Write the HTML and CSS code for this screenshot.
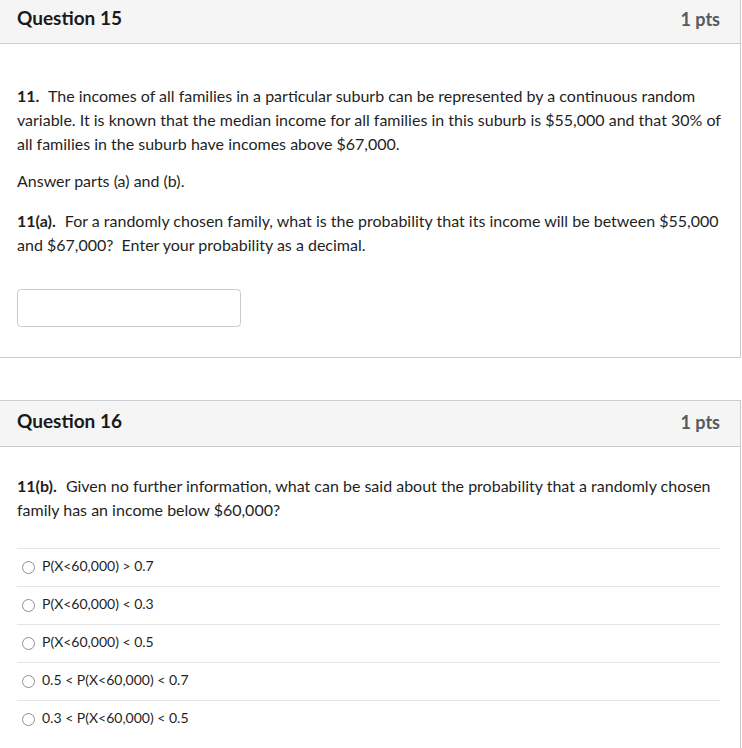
FILE: index.html
```html
<!DOCTYPE html>
<html lang="en">
<head>
<meta charset="utf-8">
<title>Quiz</title>
<link rel="stylesheet" href="styles.css">
</head>
<body>
<div class="quiz">
  <section class="card card-first">
    <header class="card-header">
      <h2 class="q-title">Question 15</h2>
      <span class="q-pts">1 pts</span>
    </header>
    <div class="card-body">
      <p class="q-text q-lead"><strong class="num">11.</strong> The incomes of all families in a particular suburb can be represented by a continuous random variable. It is known that the median income for all families in this suburb is $55,000 and that 30% of all families in the suburb have incomes above $67,000.</p>
      <p class="q-text q-mid">Answer parts (a) and (b).</p>
      <p class="q-text q-part"><strong class="num">11(a).</strong> For a randomly chosen family, what is the probability that its income will be between $55,000 and $67,000?&nbsp; Enter your probability as a decimal.</p>
      <div class="answer-row"><input class="answer-input" type="text" aria-label="Answer"></div>
    </div>
  </section>

  <section class="card card-second">
    <header class="card-header">
      <h2 class="q-title">Question 16</h2>
      <span class="q-pts">1 pts</span>
    </header>
    <div class="card-body card-body-2">
      <p class="q-text"><strong class="num">11(b).</strong> Given no further information, what can be said about the probability that a randomly chosen family has an income below $60,000?</p>
      <ul class="options">
        <li class="option"><span class="radio"></span><span class="opt-label">P(X&lt;60,000) &gt; 0.7</span></li>
        <li class="option"><span class="radio"></span><span class="opt-label">P(X&lt;60,000) &lt; 0.3</span></li>
        <li class="option"><span class="radio"></span><span class="opt-label">P(X&lt;60,000) &lt; 0.5</span></li>
        <li class="option"><span class="radio"></span><span class="opt-label">0.5 &lt; P(X&lt;60,000) &lt; 0.7</span></li>
        <li class="option"><span class="radio"></span><span class="opt-label">0.3 &lt; P(X&lt;60,000) &lt; 0.5</span></li>
      </ul>
    </div>
  </section>
</div>
</body>
</html>
```

FILE: styles.css
```css
* { box-sizing: border-box; }

html, body {
  margin: 0;
  padding: 0;
  background: #ffffff;
}

body {
  font-family: Lato, "Open Sans", "Liberation Sans", sans-serif;
  color: #1f1f1f;
  overflow: hidden;
}

.quiz {
  display: flex;
  flex-direction: column;
}

.card {
  width: 742px;
  margin-left: -1px;
  border: 1px solid #c7cdd1;
  background: #fff;
}

.card-first {
  margin-top: -3px;
}

.card-second {
  margin-top: 42px;
}

.card-header {
  display: flex;
  justify-content: space-between;
  align-items: baseline;
  height: 46px;
  padding: 8px 20px 0 17px;
  background: #f5f5f5;
  border-bottom: 1px solid #c7cdd1;
}

.q-title {
  margin: 0;
  font-size: 19px;
  line-height: 24px;
  font-weight: 700;
  color: #1a1a1a;
}

.q-pts {
  font-size: 18px;
  line-height: 24px;
  font-weight: 700;
  color: #555a5e;
  position: relative;
  top: 1px;
}

.card-body {
  padding: 40px 20px 30px 17px;
}

.card-body-2 {
  padding-top: 27px;
  padding-bottom: 30px;
}

.q-text {
  margin: 0 -10px 0 0;
  font-size: 16px;
  line-height: 24px;
  color: #1f1f1f;
}

.num {
  font-weight: 700;
  margin-right: 5px;
}

.q-mid {
  margin-top: 13px;
}

.q-part {
  margin-top: 16px;
}

.answer-row {
  margin-top: 32px;
}

.answer-input {
  display: block;
  width: 224px;
  height: 38px;
  border: 1px solid #c7cdd1;
  border-radius: 4px;
  background: #fff;
  padding: 0 8px;
  font: inherit;
}

.options {
  list-style: none;
  margin: 26px 0 0 0;
  padding: 0;
}

.option {
  display: flex;
  align-items: center;
  height: 38px;
  border-top: 1px solid #e3e5e7;
  padding-left: 5px;
  padding-bottom: 5px;
}

.radio {
  width: 13px;
  height: 13px;
  margin-top: 4px;
  border: 1px solid #8b9095;
  border-radius: 50%;
  background: #fff;
  flex: none;
}

.opt-label {
  margin-left: 7px;
  font-size: 14px;
  line-height: 17px;
  color: #1f1f1f;
}
```
